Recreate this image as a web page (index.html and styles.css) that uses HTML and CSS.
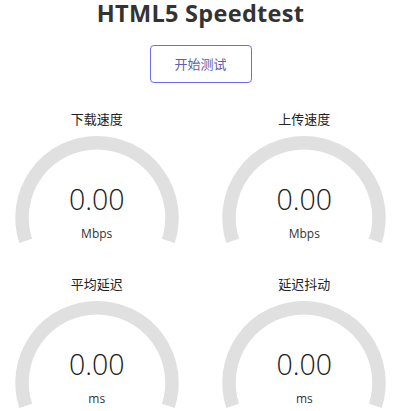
FILE: index.html
```html
<!DOCTYPE html>
<html lang="zh-CN">
<head>
<meta charset="utf-8">
<title>HTML5 Speedtest</title>
<link rel="stylesheet" href="styles.css">
</head>
<body>
<div class="page">
  <h1 class="title">HTML5 Speedtest</h1>
  <div class="start-btn">开始测试</div>
  <div class="gauges">
    <div class="gauge">
      <svg class="meter" viewBox="0 0 190 165" width="190" height="165"><path d="M 23.67 132.88 A 75 75 0 1 1 166.33 132.88" /></svg>
      <div class="readout">
        <div class="label">下载速度</div>
        <div class="value">0.00</div>
        <div class="unit">Mbps</div>
      </div>
    </div>
    <div class="gauge">
      <svg class="meter" viewBox="0 0 190 165" width="190" height="165"><path d="M 23.67 132.88 A 75 75 0 1 1 166.33 132.88" /></svg>
      <div class="readout">
        <div class="label">上传速度</div>
        <div class="value">0.00</div>
        <div class="unit">Mbps</div>
      </div>
    </div>
    <div class="gauge">
      <svg class="meter" viewBox="0 0 190 165" width="190" height="165"><path d="M 23.67 132.88 A 75 75 0 1 1 166.33 132.88" /></svg>
      <div class="readout">
        <div class="label">平均延迟</div>
        <div class="value">0.00</div>
        <div class="unit">ms</div>
      </div>
    </div>
    <div class="gauge">
      <svg class="meter" viewBox="0 0 190 165" width="190" height="165"><path d="M 23.67 132.88 A 75 75 0 1 1 166.33 132.88" /></svg>
      <div class="readout">
        <div class="label">延迟抖动</div>
        <div class="value">0.00</div>
        <div class="unit">ms</div>
      </div>
    </div>
  </div>
</div>
</body>
</html>
```

FILE: styles.css
```css
html, body {
  margin: 0;
  padding: 0;
  background: #ffffff;
}

body {
  font-family: "Open Sans", "Noto Sans CJK SC", sans-serif;
  color: #202020;
  overflow: hidden;
  height: 411px;
}

.page {
  display: flex;
  flex-direction: column;
  align-items: center;
}

.title {
  margin: 0;
  height: 26px;
  line-height: 26px;
  font-size: 23.5px;
  letter-spacing: 0.3px;
  font-weight: 700;
  color: #333333;
  text-align: center;
}

.start-btn {
  margin-top: 19px;
  width: 102px;
  height: 38px;
  box-sizing: border-box;
  border: 1.5px solid #6c6cf0;
  border-radius: 4px;
  color: #6060aa;
  font-family: "Noto Sans CJK SC", sans-serif;
  font-size: 13px;
  line-height: 35px;
  text-align: center;
}

.gauges {
  margin-top: 25px;
  display: grid;
  grid-template-columns: 190px 190px;
  grid-template-rows: 165px 138px;
  column-gap: 17.6px;
  justify-content: center;
  width: 401px;
  height: 303px;
  overflow: hidden;
}

.gauge {
  display: grid;
  width: 190px;
  height: 165px;
}

.meter,
.readout {
  grid-area: 1 / 1;
}

.meter {
  display: block;
}

.meter path {
  fill: none;
  stroke: #e0e0e0;
  stroke-width: 13.5;
  stroke-linecap: butt;
}

.readout {
  display: flex;
  flex-direction: column;
  align-items: center;
}

.label {
  height: 22px;
  line-height: 22px;
  font-family: "Noto Sans CJK SC", sans-serif;
  font-size: 13px;
  color: #222222;
}

.value {
  margin-top: 54px;
  height: 30px;
  line-height: 30px;
  font-size: 28.5px;
  font-weight: 300;
  color: #202020;
}

.unit {
  margin-top: 12px;
  height: 16px;
  line-height: 16px;
  font-size: 12px;
  color: #333333;
}
```
